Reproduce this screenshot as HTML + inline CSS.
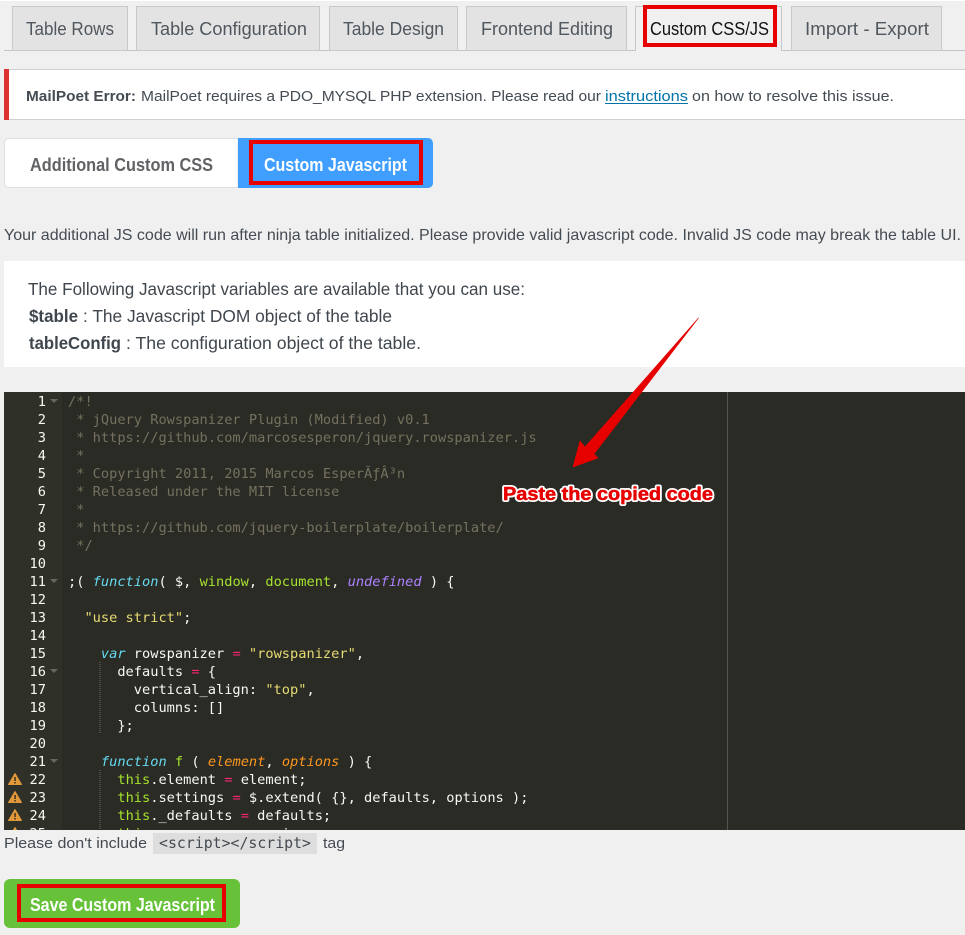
<!DOCTYPE html>
<html lang="en">
<head>
<meta charset="utf-8">
<title>Custom CSS/JS</title>
<style>
html,body{margin:0;padding:0;width:965px;height:935px;overflow:hidden;background:#f0f0f0}
svg{display:block}
text{font-family:"Liberation Sans",sans-serif;white-space:pre}
.tab{font-size:18.5px;fill:#50575e}
.n{font-size:15.2px;fill:#444b52}
.i{font-size:17.4px;fill:#3f464d}
.code text{font-family:"DejaVu Sans Mono","Liberation Mono",monospace;font-size:13.67px;fill:#f8f8f2}
.m{font-family:"DejaVu Sans Mono","Liberation Mono",monospace;fill:#444b52;font-size:14.8px}
.ln{text-anchor:end}
</style>
</head>
<body>
<svg xmlns="http://www.w3.org/2000/svg" width="965" height="935" viewBox="0 0 965 935">
<rect width="965" height="935" fill="#f0f0f0"/>
<rect width="965" height="1" fill="#fff"/>

<!-- tabs -->
<rect x="4" y="50" width="961" height="1" fill="#c3c4c7"/>
<g fill="#e3e3e3" stroke="#c8c8c8">
<rect x="12.500" y="6.500" width="115" height="44"/>
<rect x="136.500" y="6.500" width="183" height="44"/>
<rect x="329.500" y="6.500" width="128" height="44"/>
<rect x="466.500" y="6.500" width="160" height="44"/>
<rect x="791.500" y="6.500" width="150" height="44"/>
</g>
<path d="M635.500 51V6.500H781.500V51" fill="#f0f0f0" stroke="#c8c8c8"/>
<text class="tab" x="26" y="35" textLength="88" lengthAdjust="spacingAndGlyphs">Table Rows</text>
<text class="tab" x="151" y="35" textLength="156" lengthAdjust="spacingAndGlyphs">Table Configuration</text>
<text class="tab" x="343" y="35" textLength="101" lengthAdjust="spacingAndGlyphs">Table Design</text>
<text class="tab" x="481" y="35" textLength="132" lengthAdjust="spacingAndGlyphs">Frontend Editing</text>
<text class="tab" x="650" y="35" textLength="119" lengthAdjust="spacingAndGlyphs" style="fill:#111">Custom CSS/JS</text>
<text class="tab" x="805" y="35" textLength="124" lengthAdjust="spacingAndGlyphs">Import - Export</text>
<rect x="645" y="7" width="130" height="38" fill="none" stroke="#e60000" stroke-width="4"/>

<!-- notice -->
<rect x="4" y="69" width="961" height="51" fill="#fff"/>
<rect x="4" y="69" width="961" height="1" fill="#d0d0d0"/>
<rect x="4" y="119" width="961" height="1" fill="#d0d0d0"/>
<rect x="4" y="69" width="5" height="51" fill="#dc3232"/>
<text class="n" x="26" y="101" textLength="110" lengthAdjust="spacingAndGlyphs" font-weight="700">MailPoet Error:</text>
<text class="n" x="141" y="101" textLength="460" lengthAdjust="spacingAndGlyphs">MailPoet requires a PDO_MYSQL PHP extension. Please read our</text>
<text class="n" x="605" y="101" textLength="83" lengthAdjust="spacingAndGlyphs" style="fill:#0073aa">instructions</text>
<rect x="605" y="103" width="83" height="1" fill="#0073aa"/>
<text class="n" x="692" y="101" textLength="202" lengthAdjust="spacingAndGlyphs">on how to resolve this issue.</text>

<!-- segmented -->
<path d="M238 138.500H9a4.500 4.500 0 0 0-4.500 4.500V183a4.500 4.500 0 0 0 4.500 4.500H238Z" fill="#fff" stroke="#dcdfe6"/>
<path d="M238 138H428a5 5 0 0 1 5 5V183a5 5 0 0 1-5 5H238Z" fill="#409eff"/>
<rect x="251" y="142" width="170" height="41" fill="none" stroke="#e60000" stroke-width="4"/>
<text x="30" y="171" font-size="18px" font-weight="700" fill="#606266" textLength="183" lengthAdjust="spacingAndGlyphs">Additional Custom CSS</text>
<text x="264" y="171" font-size="18px" font-weight="700" fill="#fff" textLength="143" lengthAdjust="spacingAndGlyphs">Custom Javascript</text>

<!-- description -->
<text class="n" x="4" y="240" textLength="957" lengthAdjust="spacingAndGlyphs" style="font-size:15.6px">Your additional JS code will run after ninja table initialized. Please provide valid javascript code. Invalid JS code may break the table UI.</text>

<!-- info -->
<rect x="4" y="261" width="961" height="106" fill="#fff"/>
<text class="i" x="28" y="295" textLength="497" lengthAdjust="spacingAndGlyphs">The Following Javascript variables are available that you can use:</text>
<text class="i" x="29" y="322" textLength="49" lengthAdjust="spacingAndGlyphs" font-weight="700">$table</text>
<text class="i" x="83" y="322" textLength="309" lengthAdjust="spacingAndGlyphs">: The Javascript DOM object of the table</text>
<text class="i" x="29" y="349" textLength="92" lengthAdjust="spacingAndGlyphs" font-weight="700">tableConfig</text>
<text class="i" x="126" y="349" textLength="295" lengthAdjust="spacingAndGlyphs">: The configuration object of the table.</text>

<!-- editor -->
<svg x="4" y="392" width="961" height="438" viewBox="4 392 961 438">
<rect x="4" y="392" width="961" height="438" fill="#2a2b25"/>
<rect x="4" y="392" width="58" height="438" fill="#2f3129"/>
<rect x="727" y="392" width="1" height="438" fill="#555651"/>
<path d="M100 662V734M100 770V830" stroke="#6b6c66" stroke-dasharray="1 1" fill="none"/>
<g fill="#666860">
<path d="M50 399h8l-4 4zM50 579h8l-4 4zM50 669h8l-4 4zM50 759h8l-4 4z"/>
</g>
<g class="code" transform="translate(0,1)">
<text class="ln" x="46" y="405">1</text><text class="ln" x="46" y="423">2</text><text class="ln" x="46" y="441">3</text><text class="ln" x="46" y="459">4</text><text class="ln" x="46" y="477">5</text><text class="ln" x="46" y="495">6</text><text class="ln" x="46" y="513">7</text><text class="ln" x="46" y="531">8</text><text class="ln" x="46" y="549">9</text><text class="ln" x="46" y="567">10</text><text class="ln" x="46" y="585">11</text><text class="ln" x="46" y="603">12</text><text class="ln" x="46" y="621">13</text><text class="ln" x="46" y="639">14</text><text class="ln" x="46" y="657">15</text><text class="ln" x="46" y="675">16</text><text class="ln" x="46" y="693">17</text><text class="ln" x="46" y="711">18</text><text class="ln" x="46" y="729">19</text><text class="ln" x="46" y="747">20</text><text class="ln" x="46" y="765">21</text><text class="ln" x="46" y="783">22</text><text class="ln" x="46" y="801">23</text><text class="ln" x="46" y="819">24</text><text class="ln" x="46" y="837">25</text>

<text x="68" y="405" style="fill:#75715e">/*!</text>
<text x="68" y="423" style="fill:#75715e"> * jQuery Rowspanizer Plugin (Modified) v0.1</text>
<text x="68" y="441" style="fill:#75715e"> * https://github.com/marcosesperon/jquery.rowspanizer.js</text>
<text x="68" y="459" style="fill:#75715e"> *</text>
<text x="68" y="477" style="fill:#75715e"> * Copyright 2011, 2015 Marcos EsperÃƒÂ³n</text>
<text x="68" y="495" style="fill:#75715e"> * Released under the MIT license</text>
<text x="68" y="513" style="fill:#75715e"> *</text>
<text x="68" y="531" style="fill:#75715e"> * https://github.com/jquery-boilerplate/boilerplate/</text>
<text x="68" y="549" style="fill:#75715e"> */</text>

<text x="68" y="585">;( <tspan style="fill:#66d9ef;font-style:italic">function</tspan>( $, <tspan style="fill:#a6e22e">window</tspan>, <tspan style="fill:#a6e22e">document</tspan>, <tspan style="fill:#ae81ff;font-style:italic">undefined</tspan> ) {</text>
<text x="68" y="621" style="fill:#e6db74">  "use strict"<tspan style="fill:#f8f8f2">;</tspan></text>
<text x="68" y="657">    <tspan style="fill:#66d9ef;font-style:italic">var</tspan> rowspanizer <tspan style="fill:#f92672">=</tspan> <tspan style="fill:#e6db74">"rowspanizer"</tspan>,</text>
<text x="68" y="675">      defaults <tspan style="fill:#f92672">=</tspan> {</text>
<text x="68" y="693">        vertical_align: <tspan style="fill:#e6db74">"top"</tspan>,</text>
<text x="68" y="711">        columns: []</text>
<text x="68" y="729">      };</text>
<text x="68" y="765">    <tspan style="fill:#66d9ef;font-style:italic">function</tspan> <tspan style="fill:#a6e22e">f</tspan> ( <tspan style="fill:#fd971f;font-style:italic">element</tspan>, <tspan style="fill:#fd971f;font-style:italic">options</tspan> ) {</text>
<text x="68" y="783">      <tspan style="fill:#a6e22e">this</tspan>.element <tspan style="fill:#f92672">=</tspan> element;</text>
<text x="68" y="801">      <tspan style="fill:#a6e22e">this</tspan>.settings <tspan style="fill:#f92672">=</tspan> $.extend( {}, defaults, options );</text>
<text x="68" y="819">      <tspan style="fill:#a6e22e">this</tspan>._defaults <tspan style="fill:#f92672">=</tspan> defaults;</text>
<text x="68" y="837">      <tspan style="fill:#a6e22e">this</tspan>._name <tspan style="fill:#f92672">=</tspan> rowspanizer;</text>
</g>
<g fill="#e0993a" stroke="#e0993a" stroke-width="1" stroke-linejoin="round">
<path d="M15 773.500L21.500 784.500H8.500Z"/><path d="M15 791.500L21.500 802.500H8.500Z"/><path d="M15 809.500L21.500 820.500H8.500Z"/><path d="M15 827.500L21.500 838.500H8.500Z"/>
</g>
<g fill="#3a3020"><rect x="14.300" y="777" width="1.500" height="4"/><rect x="14.300" y="782" width="1.500" height="1.500"/><rect x="14.300" y="795" width="1.500" height="4"/><rect x="14.300" y="800" width="1.500" height="1.500"/><rect x="14.300" y="813" width="1.500" height="4"/><rect x="14.300" y="818" width="1.500" height="1.500"/></g>
</svg>

<!-- arrow overlay -->
<path d="M698.500 318L594 454 598 458 573 467 580 441 585 447Z" fill="#e60000" stroke="#e60000" stroke-width="0.6" stroke-linejoin="round"/>
<text x="503" y="500" font-size="18.500px" font-weight="700" fill="none" stroke="#fff" stroke-width="4" stroke-linejoin="round" textLength="210" lengthAdjust="spacingAndGlyphs">Paste the copied code</text>
<text x="503" y="500" font-size="18.500px" font-weight="700" fill="#e60000" stroke="#e60000" stroke-width="0.5" textLength="210" lengthAdjust="spacingAndGlyphs">Paste the copied code</text>

<!-- note -->
<text class="n" x="4" y="848" textLength="143" lengthAdjust="spacingAndGlyphs">Please don't include</text>
<rect x="153" y="833" width="164" height="21" fill="#dedede"/>
<text class="m" x="159" y="848" textLength="152" lengthAdjust="spacingAndGlyphs">&lt;script&gt;&lt;/script&gt;</text>
<text class="n" x="323" y="848" textLength="22" lengthAdjust="spacingAndGlyphs">tag</text>

<!-- save button -->
<rect x="4" y="879" width="236" height="49" rx="6" fill="#67c23a"/>
<rect x="19" y="886" width="205" height="34" fill="none" stroke="#e60000" stroke-width="4"/>
<text x="30" y="911" font-size="18px" font-weight="700" fill="#fff" textLength="185" lengthAdjust="spacingAndGlyphs">Save Custom Javascript</text>
</svg>
</body>
</html>
